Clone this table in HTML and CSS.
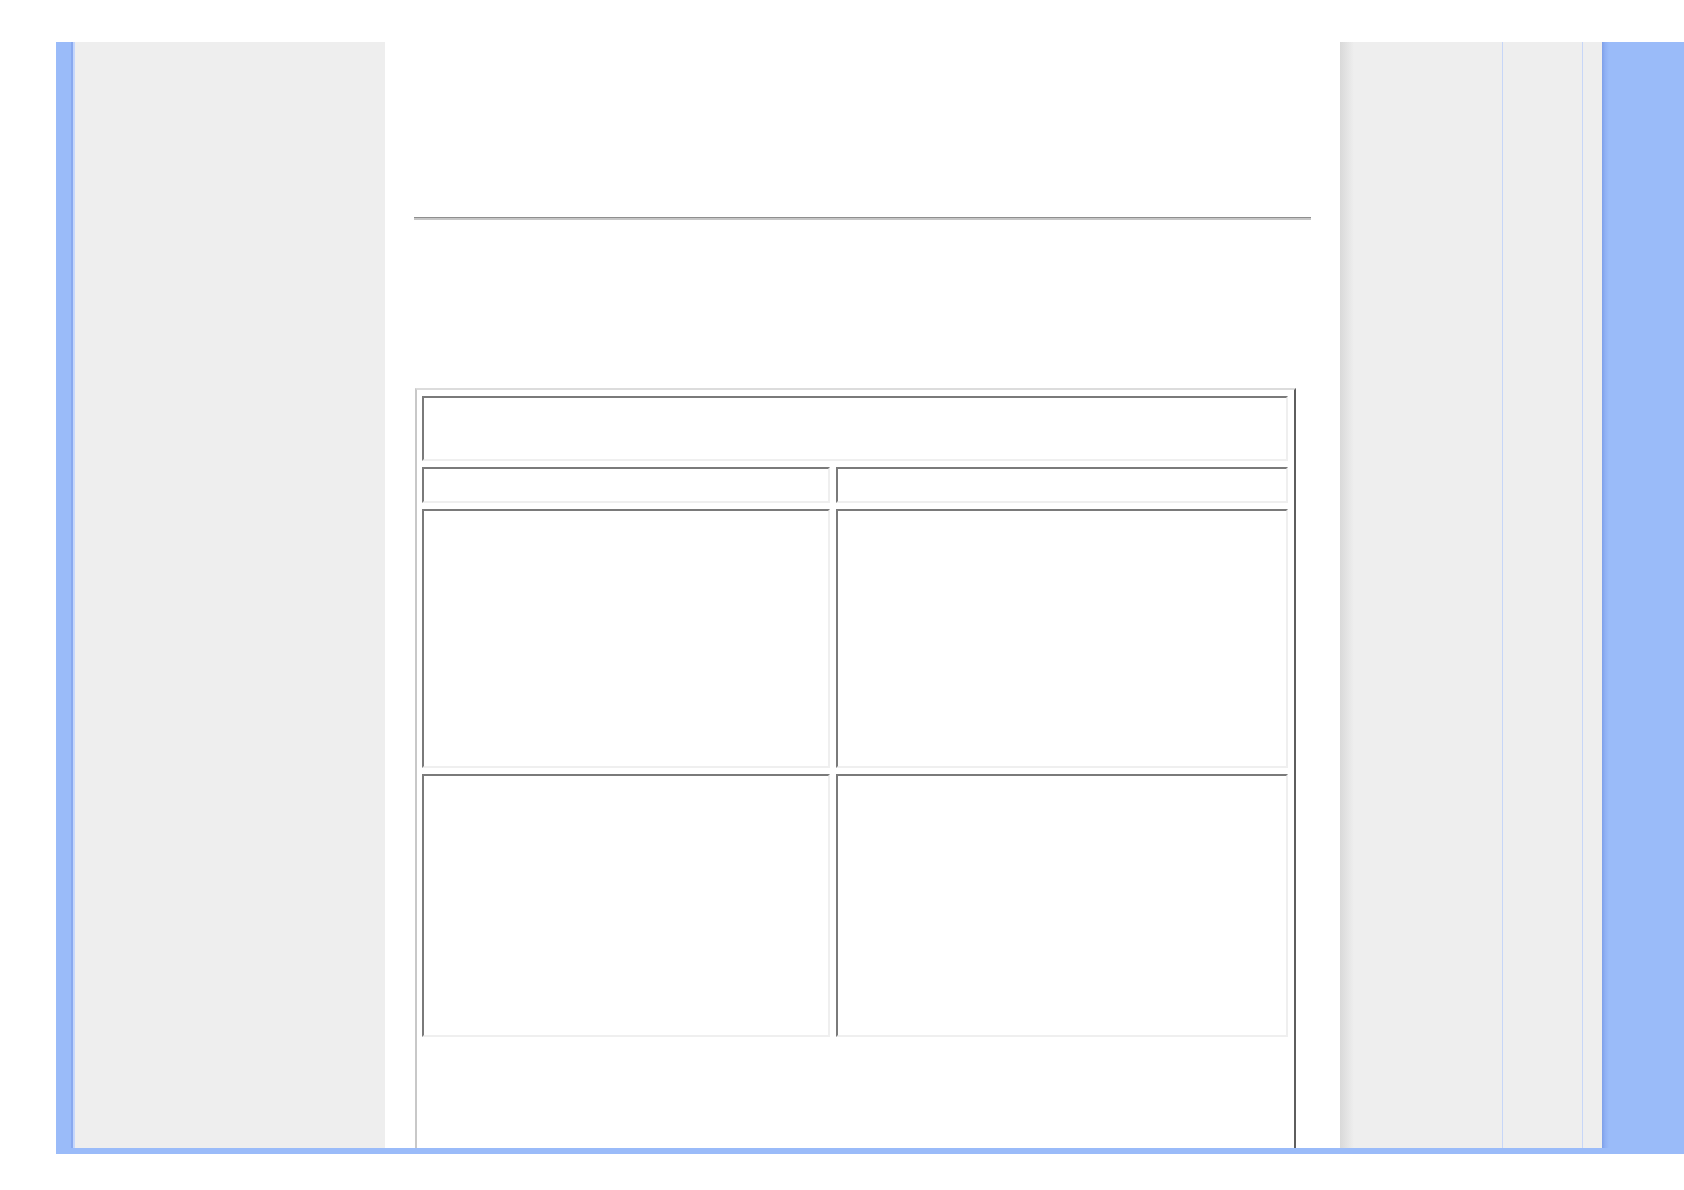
FILE: index.html
```html
<!DOCTYPE html>
<html>
<head>
<meta charset="utf-8">
<link rel="stylesheet" href="styles.css">
</head>
<body>
<div class="page">
  <div class="main">
    <div class="lblue"></div>
    <div class="lgray"></div>
    <div class="center">
      <div class="rule"></div>
      <div class="tbl">
        <div class="cell span2 r1"></div>
        <div class="cell r2"></div>
        <div class="cell r2"></div>
        <div class="cell r3"></div>
        <div class="cell r3"></div>
        <div class="cell r4"></div>
        <div class="cell r4"></div>
      </div>
    </div>
    <div class="rgray"></div>
    <div class="rblue"></div>
  </div>
  <div class="bar"></div>
</div>
</body>
</html>
```

FILE: styles.css
```css
html, body {
  margin: 0;
  padding: 0;
  background: #ffffff;
  font-family: "Liberation Serif", serif;
}
.page {
  padding-top: 42px;
  padding-left: 56px;
  width: 1628px;
}
.main {
  display: flex;
  height: 1106px;
}
.lblue {
  width: 15px;
  background: #9abbf9;
  border-right: 2px solid #89a9ef;
  position: relative;
}
.lblue::after {
  content: "";
  position: absolute;
  top: 0;
  bottom: 0;
  right: -4px;
  width: 2px;
  background: #c4d6fc;
}
.lgray {
  width: 310px;
  margin-left: 2px;
  background: #eeeeee;
}
.center {
  width: 955px;
  background: #ffffff;
  overflow: hidden;
  padding-top: 175px;
  box-sizing: border-box;
}
.rule {
  margin-left: 29px;
  width: 897px;
  height: 1px;
  background: #8e8e8e;
  border-bottom: 2px solid #c6c6c6;
}
.tbl {
  margin-top: 168px;
  margin-left: 30px;
  width: 881px;
  height: 900px;
  box-sizing: border-box;
  border-top: 2px solid #dcdcdc;
  border-left: 2px solid #c8c8c8;
  border-right: 2px solid #5e5e5e;
  padding: 6px 6px 6px 5px;
  display: grid;
  grid-template-columns: 408px 452px;
  grid-template-rows: 65px 36px 259px 263px;
  column-gap: 6px;
  row-gap: 6px;
  align-content: start;
}
.cell {
  box-sizing: border-box;
  border-top: 2px solid #7a7a7a;
  border-left: 2px solid #7a7a7a;
  border-bottom: 2px solid #efefef;
  border-right: 2px solid #efefef;
}
.span2 {
  grid-column: 1 / 3;
}
.rgray {
  width: 262px;
  background: linear-gradient(to right, #d9d9d9 0px, #eeeeee 14px, #eeeeee 100%);
  position: relative;
}
.rgray::before,
.rgray::after {
  content: "";
  position: absolute;
  top: 0;
  bottom: 0;
  width: 1px;
  background: #c6d6f8;
}
.rgray::before { left: 162px; }
.rgray::after { left: 242px; }
.rblue {
  flex: 1;
  background: linear-gradient(to right, #7e9fe8 0px, #8fb0f4 3px, #9abbf9 7px, #9abbf9 100%);
}
.bar {
  height: 6px;
  background: #9abbf9;
}
```
